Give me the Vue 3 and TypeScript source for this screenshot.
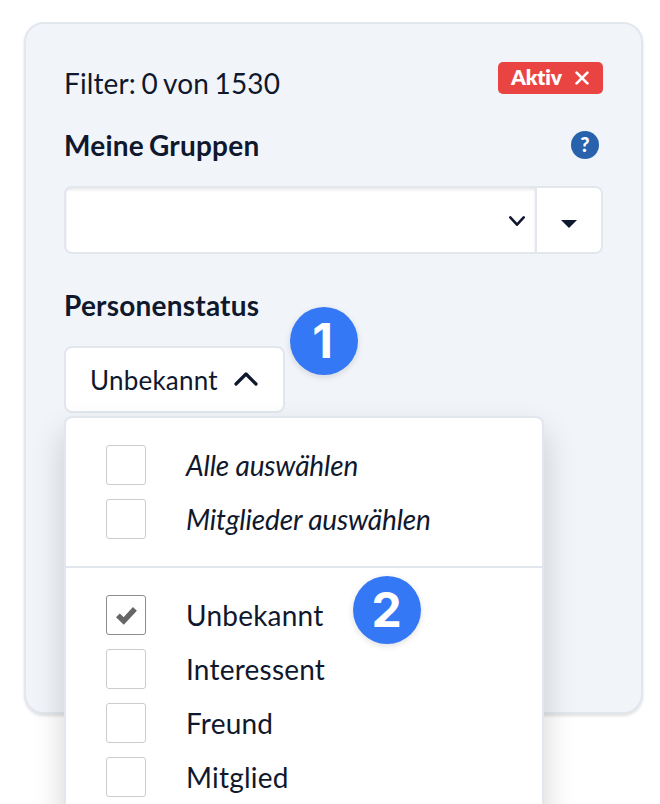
<script setup lang="ts">
import { ref } from 'vue'

interface Option {
  label: string
  checked: boolean
}

const total = 1530
const matches = 0

const bulkOptions = ref<Option[]>([
  { label: 'Alle auswählen', checked: false },
  { label: 'Mitglieder auswählen', checked: false },
])

const statusOptions = ref<Option[]>([
  { label: 'Unbekannt', checked: true },
  { label: 'Interessent', checked: false },
  { label: 'Freund', checked: false },
  { label: 'Mitglied', checked: false },
])

function toggle(option: Option) {
  option.checked = !option.checked
}
</script>

<template>
  <main class="page">
    <section class="card">
      <header class="head">
        <span class="summary">Filter: {{ matches }} von {{ total }}</span>
        <button class="active-tag" type="button">
          <span>Aktiv</span>
          <svg class="close" width="14" height="14" viewBox="0 0 14 14">
            <path d="M1.6 1.6 12.4 12.4M12.4 1.6 1.6 12.4" />
          </svg>
        </button>
      </header>

      <div class="title-row">
        <h2 class="title">Meine Gruppen</h2>
        <span class="help">?</span>
      </div>

      <div class="select-group">
        <div class="select">
          <svg class="chevron" width="16" height="11" viewBox="0 0 16 11">
            <path d="M1.3 1.4 8 8.7 14.7 1.4" />
          </svg>
        </div>
        <button class="more" type="button">
          <svg width="16" height="8" viewBox="0 0 16 8"><path d="M0 0H16L8 8Z" fill="#10182d" /></svg>
        </button>
      </div>

      <h2 class="title status-title">Personenstatus</h2>

      <div class="dropdown">
        <button class="toggle" type="button">
          <span>Unbekannt</span>
          <svg class="chevron up" width="24" height="16" viewBox="0 0 24 16">
            <path d="M2 12 12 2 22 12" />
          </svg>
        </button>

        <div class="menu">
          <ul class="options bulk">
            <li v-for="o in bulkOptions" :key="o.label" class="option" @click="toggle(o)">
              <span class="box" :class="{ on: o.checked }"></span>
              <em>{{ o.label }}</em>
            </li>
          </ul>
          <ul class="options">
            <li v-for="o in statusOptions" :key="o.label" class="option" @click="toggle(o)">
              <span class="box" :class="{ on: o.checked }">
                <svg v-if="o.checked" width="22" height="20" viewBox="0 0 22 20">
                  <path d="M2.9 10.4 8.7 16 19.9 3.9" />
                </svg>
              </span>
              <span>{{ o.label }}</span>
            </li>
          </ul>
        </div>
      </div>
    </section>

    <span class="marker first">1</span>
    <span class="marker second">2</span>
  </main>
</template>

<style>
body {
  background: #fff;
}
</style>

<style scoped>
.page {
  position: relative;
  box-sizing: border-box;
  height: 804px;
  padding: 22px 17px 0 24px;
  overflow: hidden;
  font-family: Lato, sans-serif;
  font-size: 28px;
  line-height: 40px;
  letter-spacing: 0.22px;
  color: #10182d;
}

.page * {
  box-sizing: border-box;
}

button {
  margin: 0;
  padding: 0;
  border: 0;
  font: inherit;
  letter-spacing: inherit;
  color: inherit;
}

.card {
  height: 692px;
  padding: 38px;
  border: 2px solid #e2e7ee;
  border-radius: 20px;
  background: #f1f5fa;
  box-shadow: 0 2px 3px rgba(0, 0, 0, 0.12);
}

.head {
  display: flex;
  align-items: flex-start;
  justify-content: space-between;
}

.summary {
  padding-top: 1px;
  letter-spacing: 0.12px;
  word-spacing: -1.6px;
}

.active-tag {
  display: flex;
  align-items: center;
  gap: 13px;
  width: 105px;
  height: 32px;
  padding-left: 13px;
  border-radius: 5px;
  background: #e94441;
  color: #fff;
  font-size: 21px;
  font-weight: 800;
  letter-spacing: -0.15px;
  line-height: 30px;
}

.active-tag span {
  padding-bottom: 2px;
}

.close {
  fill: none;
  stroke: #fff;
  stroke-width: 2.7;
  stroke-linecap: round;
}

.title-row {
  display: flex;
  align-items: center;
  justify-content: space-between;
  margin-top: 22px;
  padding-right: 4px;
}

.title {
  margin: 0;
  font-size: 28px;
  font-weight: 700;
  line-height: 40px;
  word-spacing: -2px;
}

.help {
  width: 28px;
  height: 28px;
  border-radius: 50%;
  background: #2862ad;
  color: #fff;
  font-size: 20px;
  font-weight: 900;
  line-height: 27px;
  text-align: center;
}

.select-group {
  display: flex;
  height: 68px;
  margin-top: 21px;
  border: 2px solid #e2e7ee;
  border-radius: 8px;
  background: #fff;
  overflow: hidden;
}

.select {
  display: flex;
  flex: 1;
  align-items: center;
  justify-content: flex-end;
  padding: 2px 10px 0 0;
  box-shadow: inset 0 2px 3px rgba(0, 0, 0, 0.09);
}

.chevron {
  fill: none;
  stroke: #10182d;
  stroke-width: 2.6;
  stroke-linecap: round;
  stroke-linejoin: round;
}

.chevron.up {
  stroke-width: 3.2;
}

.more {
  display: flex;
  align-items: center;
  justify-content: center;
  width: 66px;
  padding-top: 7px;
  border-left: 2px solid #e2e7ee;
  background: #fff;
}

.status-title {
  margin-top: 31px;
}

.dropdown {
  position: relative;
  width: 480px;
  margin-top: 21px;
}

.toggle {
  display: flex;
  align-items: center;
  gap: 16px;
  width: 221px;
  height: 67px;
  padding-left: 24px;
  border: 2px solid #e2e7ee;
  border-radius: 8px;
  background: #fff;
  font-size: 26px;
}

.menu {
  position: absolute;
  top: 70px;
  left: 0;
  width: 480px;
  height: 460px;
  border: 2px solid #e2e7ee;
  border-radius: 8px;
  background: #fff;
  box-shadow: 0 16px 32px rgba(0, 0, 0, 0.175);
}

.options {
  display: flex;
  flex-direction: column;
  gap: 14px;
  margin: 0;
  padding: 27px 40px;
  list-style: none;
}

.options.bulk {
  border-bottom: 2px solid #e2e7ee;
  letter-spacing: -0.15px;
}

.option {
  display: flex;
  gap: 40px;
  height: 40px;
}

.box {
  display: flex;
  align-items: center;
  justify-content: center;
  width: 40px;
  height: 40px;
  border: 1px solid #ccc;
  border-radius: 3px;
  background: #fff;
}

.box.on {
  border-color: #8c8c8c;
}

.box path {
  fill: none;
  stroke: #666;
  stroke-width: 5.4;
}

.marker {
  position: absolute;
  width: 68px;
  height: 68px;
  padding-top: 10px;
  border-radius: 50%;
  background: #3478f6;
  box-shadow: 0 2px 6px rgba(0, 0, 0, 0.13);
  color: #fff;
  font-family: Inter, sans-serif;
  font-size: 48px;
  font-weight: 700;
  letter-spacing: 0;
  line-height: 48px;
  text-align: center;
}

.first {
  top: 307px;
  left: 289.5px;
  padding-right: 2px;
}

.second {
  top: 576px;
  left: 352.5px;
}
</style>
